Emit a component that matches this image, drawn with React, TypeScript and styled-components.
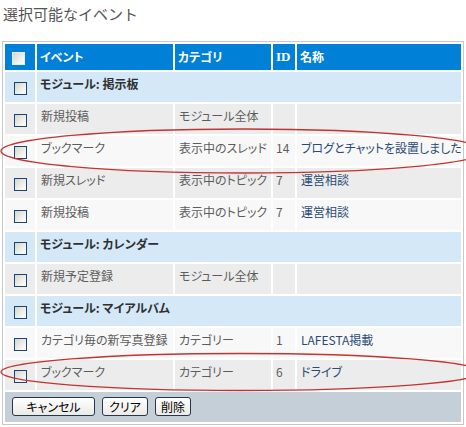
import React from 'react';
import styled, { createGlobalStyle } from 'styled-components';

const GlobalStyle = createGlobalStyle`
  html, body { margin: 0; padding: 0; background: #ffffff; }
  body {
    font-family: "Noto Sans CJK JP", sans-serif;
    font-size: 12px;
    font-feature-settings: "palt";
  }
`;

const Page = styled.div`
  position: relative;
  width: 466px;
  height: 427px;
  padding-left: 2px;
  box-sizing: border-box;
  overflow: hidden;
`;

const Title = styled.h2`
  margin: 0 0 17px 1px;
  padding-top: 4px;
  font-size: 15px;
  line-height: 20px;
  font-weight: normal;
  color: #555555;
  font-feature-settings: normal;
`;

const Table = styled.table`
  width: 462px;
  table-layout: fixed;
  border-collapse: separate;
  border-spacing: 2px;
  border: 1px solid #c8c8c8;
  box-sizing: border-box;
`;

const HeadRow = styled.tr`
  height: 26px;
`;

const BodyRow = styled.tr`
  height: 30px;
`;

const HeadCell = styled.th<{ $serif?: boolean }>`
  background: #0080d7;
  color: #ffffff;
  font-weight: bold;
  text-align: left;
  vertical-align: middle;
  padding: 0 0 0 3px;
  line-height: 14px;
  white-space: nowrap;
  overflow: hidden;
  font-family: ${(p) => (p.$serif ? '"Liberation Serif", serif' : 'inherit')};
  font-size: ${(p) => (p.$serif ? '13px' : '12px')};
`;

const CheckCell = styled.td<{ $tone: Tone; $head?: boolean }>`
  background: ${(p) => tones[p.$tone]};
  vertical-align: top;
  padding: ${(p) => (p.$head ? '8px 0 0 7px' : '10px 0 0 9px')};
`;

const ModuleCell = styled.td`
  background: #d4e8f8;
  vertical-align: top;
  padding: 5px 0 0 3px;
  font-weight: bold;
  color: #303030;
  line-height: 14px;
  white-space: nowrap;
`;

const DataCell = styled.td<{ $tone: Tone; $link?: boolean; $pad?: number }>`
  background: ${(p) => tones[p.$tone]};
  vertical-align: top;
  padding: 5px 0 0 ${(p) => p.$pad ?? 4}px;
  line-height: 14px;
  color: ${(p) => (p.$link ? '#2b4b76' : '#5c5c5c')};
  white-space: nowrap;
  overflow: hidden;
`;

const BarCell = styled.td`
  background: #c5cfd8;
  vertical-align: top;
  padding: 5px 0 0 7px;
`;

const Toolbar = styled.div`
  display: flex;
  gap: 7px;
`;

const Button = styled.button<{ $w: number }>`
  width: ${(p) => p.$w}px;
  height: 19px;
  padding: 0;
  border: 1px solid #26364e;
  border-radius: 3px;
  background: linear-gradient(#ffffff, #ebeae4);
  font-family: inherit;
  font-size: 12px;
  line-height: 16px;
  color: #000000;
  font-feature-settings: "palt";
`;

const Box = styled.span<{ $light?: boolean }>`
  display: block;
  width: 11px;
  height: 11px;
  border: 1px solid ${(p) => (p.$light ? '#e4eef6' : '#1c4470')};
  background: linear-gradient(135deg, #d6d6d0 0%, #f4f4f0 70%, #ffffff 100%);
`;

const Marks = styled.svg`
  position: absolute;
  left: 0;
  top: 0;
  pointer-events: none;
`;

type Tone = 'head' | 'module' | 'gray' | 'light';

const tones: Record<Tone, string> = {
  head: '#0080d7',
  module: '#d4e8f8',
  gray: '#ececec',
  light: '#f8f8f8',
};

type Row =
  | { kind: 'module'; title: string }
  | { kind: 'item'; event: string; category: string; id?: string; name?: string; tone: Tone };

const rows: Row[] = [
  { kind: 'module', title: 'モジュール: 掲示板' },
  { kind: 'item', event: '新規投稿', category: 'モジュール全体', tone: 'gray' },
  { kind: 'item', event: 'ブックマーク', category: '表示中のスレッド', id: '14', name: 'ブログとチャットを設置しました', tone: 'light' },
  { kind: 'item', event: '新規スレッド', category: '表示中のトピック', id: '7', name: '運営相談', tone: 'gray' },
  { kind: 'item', event: '新規投稿', category: '表示中のトピック', id: '7', name: '運営相談', tone: 'light' },
  { kind: 'module', title: 'モジュール: カレンダー' },
  { kind: 'item', event: '新規予定登録', category: 'モジュール全体', tone: 'gray' },
  { kind: 'module', title: 'モジュール: マイアルバム' },
  { kind: 'item', event: 'カテゴリ毎の新写真登録', category: 'カテゴリー', id: '1', name: 'LAFESTA掲載', tone: 'light' },
  { kind: 'item', event: 'ブックマーク', category: 'カテゴリー', id: '6', name: 'ドライブ', tone: 'gray' },
];

export default function App() {
  return (
    <Page>
      <GlobalStyle />
      <Title>選択可能なイベント</Title>
      <Table>
        <colgroup>
          <col style={{ width: 30 }} />
          <col style={{ width: 136 }} />
          <col style={{ width: 96 }} />
          <col style={{ width: 22 }} />
          <col style={{ width: 164 }} />
        </colgroup>
        <thead>
          <HeadRow>
            <CheckCell as="th" $tone="head" $head>
              <Box $light />
            </CheckCell>
            <HeadCell>イベント</HeadCell>
            <HeadCell>カテゴリ</HeadCell>
            <HeadCell $serif>ID</HeadCell>
            <HeadCell>名称</HeadCell>
          </HeadRow>
        </thead>
        <tbody>
          {rows.map((r, i) =>
            r.kind === 'module' ? (
              <BodyRow key={i}>
                <CheckCell $tone="module">
                  <Box />
                </CheckCell>
                <ModuleCell colSpan={4}>{r.title}</ModuleCell>
              </BodyRow>
            ) : (
              <BodyRow key={i}>
                <CheckCell $tone={r.tone}>
                  <Box />
                </CheckCell>
                <DataCell $tone={r.tone}>{r.event}</DataCell>
                <DataCell $tone={r.tone}>{r.category}</DataCell>
                <DataCell $tone={r.tone} $pad={3}>{r.id ?? ''}</DataCell>
                <DataCell $tone={r.tone} $link>{r.name ?? ''}</DataCell>
              </BodyRow>
            )
          )}
          <BodyRow>
            <BarCell colSpan={5}>
              <Toolbar>
                <Button $w={83}>キャンセル</Button>
                <Button $w={46}>クリア</Button>
                <Button $w={36}>削除</Button>
              </Toolbar>
            </BarCell>
          </BodyRow>
        </tbody>
      </Table>
      {/* hand-drawn red rings around the two bookmark rows */}
      <Marks width={466} height={427} viewBox="0 0 466 427">
        <ellipse cx={243} cy={151} rx={242} ry={22} fill="none" stroke="#c43232" strokeWidth={1.3} />
        <ellipse cx={241} cy={372} rx={240} ry={18.5} fill="none" stroke="#c43232" strokeWidth={1.3} />
      </Marks>
    </Page>
  );
}
